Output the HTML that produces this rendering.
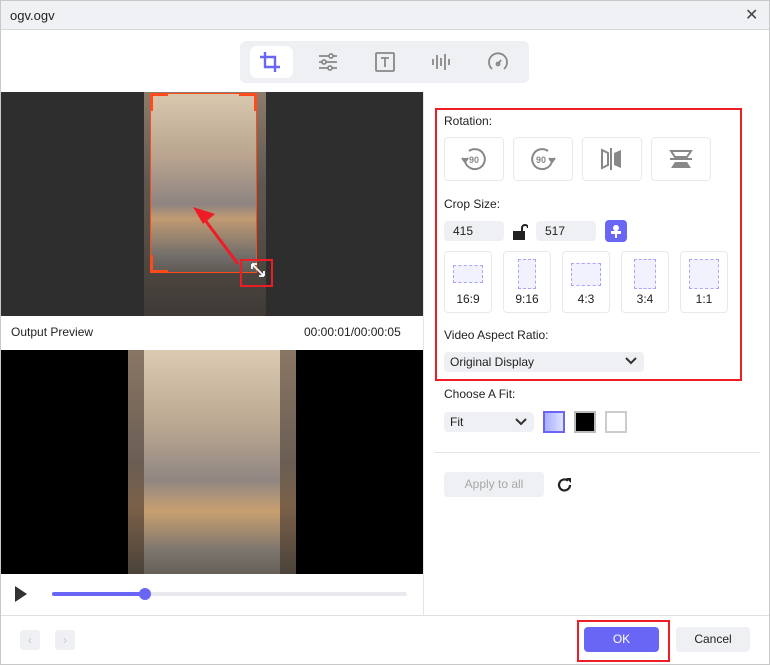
<!DOCTYPE html>
<html><head><meta charset="utf-8"><style>
*{box-sizing:border-box;margin:0;padding:0}
body{width:770px;height:665px;position:relative;background:#fff;font-family:"Liberation Sans",sans-serif;font-size:12px;color:#222;overflow:hidden}
.a{position:absolute}
.box{position:absolute;border:1px solid #e8e9ee;border-radius:4px;background:#fff}
.inp{position:absolute;background:#eff0f4;border-radius:4px;height:20px;line-height:20px;padding-left:9px;font-size:12px}
.ratio{position:absolute;top:251px;width:48px;height:62px;border:1px solid #e8e9ee;border-radius:4px;text-align:center;font-size:12px}
.ratio i{display:block;margin:0 auto;border:1px dashed #a9a6f7;background:#f2f2ff}
.ratio span{position:absolute;bottom:6px;left:0;right:0}
</style></head><body>
<div class="a" style="left:0;top:0;width:770px;height:665px;border:1px solid #c8c8c8"></div>
<div class="a" style="left:1px;top:1px;width:768px;height:29px;background:#f0f1f4;border-bottom:1px solid #d6d6d6"></div>
<div class="a" style="left:10px;top:8px;font-size:13px">ogv.ogv</div>
<div class="a" style="left:745px;top:5px;font-size:16px;color:#444">✕</div>
<!-- toolbar -->
<div class="a" style="left:240px;top:41px;width:289px;height:42px;background:#eff0f4;border-radius:6px"></div>
<div class="a" style="left:250px;top:46px;width:43px;height:32px;background:#fff;border-radius:7px"></div>
<svg class="a" style="left:258px;top:50px" width="24" height="24" viewBox="0 0 24 24" fill="none" stroke="#6a66f5" stroke-width="2.4"><path d="M7 2v15h15M2 7h15v15"/></svg>
<svg class="a" style="left:316px;top:50px" width="24" height="24" viewBox="0 0 24 24" fill="none" stroke="#888" stroke-width="1.8"><path d="M3 6h18M3 12h18M3 18h18"/><circle cx="15" cy="6" r="2" fill="#fff"/><circle cx="8" cy="12" r="2" fill="#fff"/><circle cx="14" cy="18" r="2" fill="#fff"/></svg>
<svg class="a" style="left:373px;top:50px" width="24" height="24" viewBox="0 0 24 24" fill="none" stroke="#888" stroke-width="1.8"><rect x="3" y="3" width="18" height="18" rx="1"/><path d="M8 8h8M12 8v9"/></svg>
<svg class="a" style="left:429px;top:50px" width="24" height="24" viewBox="0 0 24 24" fill="none" stroke="#888" stroke-width="1.8"><path d="M4 9v6M8 5v14M12 8v8M16 4v16M20 9v6"/></svg>
<svg class="a" style="left:486px;top:50px" width="24" height="24" viewBox="0 0 24 24" fill="none" stroke="#888" stroke-width="1.8"><path d="M6 19a9 9 0 1 1 12 0"/><path d="M12 14l3-4"/><circle cx="12" cy="14" r="1.5"/></svg>
<!-- top video -->
<div class="a" style="left:1px;top:92px;width:422px;height:224px;background:#2e2e2e"></div>
<div class="a" style="left:144px;top:92px;width:122px;height:224px;background:linear-gradient(#8c7c6c,#605850 40%,#5a5048 60%,#3e3a36)"></div>
<div class="a" style="left:150px;top:93px;width:107px;height:180px;background:linear-gradient(#d9c7ae,#b9a58f 35%,#8e8480 62%,#c19a72 70%,#74706c 90%,#605a55);border:1px solid #ff4a1c"></div>
<div class="a" style="left:150px;top:93px;width:18px;height:3px;background:#ff4a1c"></div>
<div class="a" style="left:239px;top:93px;width:18px;height:3px;background:#ff4a1c"></div>
<div class="a" style="left:150px;top:93px;width:3px;height:18px;background:#ff4a1c"></div>
<div class="a" style="left:254px;top:93px;width:3px;height:18px;background:#ff4a1c"></div>
<div class="a" style="left:150px;top:255px;width:3px;height:18px;background:#ff4a1c"></div>
<div class="a" style="left:150px;top:270px;width:18px;height:3px;background:#ff4a1c"></div>
<svg class="a" style="left:180px;top:200px" width="100" height="80"><path d="M58 64L22 16" stroke="#ee1c25" stroke-width="3"/><path d="M13 7l22 7-12 10z" fill="#ee1c25"/><path d="M72 64l12 12M72 64v5M72 64h5M84 76v-5M84 76h-5" stroke="#fff" stroke-width="1.8"/></svg>
<div class="a" style="left:240px;top:259px;width:33px;height:28px;border:2px solid #ee1c25"></div>
<!-- output preview -->
<div class="a" style="left:11px;top:325px;font-size:12px">Output Preview</div>
<div class="a" style="left:304px;top:325px;font-size:12px">00:00:01/00:00:05</div>
<div class="a" style="left:1px;top:350px;width:422px;height:224px;background:#000"></div>
<div class="a" style="left:128px;top:350px;width:168px;height:224px;background:linear-gradient(#8a7664,#6a5e54 50%,#7a6048 70%,#4a423a)"></div>
<div class="a" style="left:144px;top:350px;width:136px;height:224px;background:linear-gradient(#dccab2,#b9a690 35%,#908682 58%,#c8a070 72%,#7a746e 90%,#666058)"></div>
<svg class="a" style="left:13px;top:585px" width="16" height="18"><path d="M2 1l12 8-12 8z" fill="#333"/></svg>
<div class="a" style="left:52px;top:592px;width:355px;height:4px;background:#e8e9ee;border-radius:2px"></div>
<div class="a" style="left:52px;top:592px;width:94px;height:4px;background:#6a66f5;border-radius:2px"></div>
<div class="a" style="left:139px;top:588px;width:12px;height:12px;background:#6a66f5;border-radius:50%"></div>
<div class="a" style="left:423px;top:92px;width:1px;height:523px;background:#e4e4e4"></div>
<!-- right panel -->
<div class="a" style="left:435px;top:108px;width:307px;height:273px;border:2px solid #ee1c25"></div>
<div class="a" style="left:444px;top:114px">Rotation:</div>
<div class="box" style="left:444px;top:137px;width:60px;height:44px"></div>
<div class="box" style="left:513px;top:137px;width:60px;height:44px"></div>
<div class="box" style="left:582px;top:137px;width:60px;height:44px"></div>
<div class="box" style="left:651px;top:137px;width:60px;height:44px"></div>
<svg class="a" style="left:460px;top:145px" width="28" height="28" viewBox="0 0 28 28" fill="none" stroke="#888" stroke-width="2"><path d="M5 16a10 10 0 1 0 4-10"/><path d="M2 13l3 4 3-4" fill="#888"/><text x="9" y="18" font-size="9" font-weight="bold" fill="#888" stroke="none" font-family="Liberation Sans">90</text></svg>
<svg class="a" style="left:529px;top:145px" width="28" height="28" viewBox="0 0 28 28" fill="none" stroke="#888" stroke-width="2"><path d="M23 16a10 10 0 1 1-4-10"/><path d="M20 13l3 4 3-4" fill="#888"/><text x="7" y="18" font-size="9" font-weight="bold" fill="#888" stroke="none" font-family="Liberation Sans">90</text></svg>
<svg class="a" style="left:599px;top:146px" width="26" height="26"><path d="M3 4l6 3v12l-6 3z" fill="none" stroke="#888" stroke-width="2"/><path d="M12 2v22" stroke="#888" stroke-width="2"/><path d="M15 7l7-3v18l-7-3z" fill="#888"/></svg>
<svg class="a" style="left:668px;top:146px" width="26" height="26"><path d="M3 5h20l-4 6H7z" fill="none" stroke="#888" stroke-width="2"/><path d="M2 13h22" stroke="#888" stroke-width="2"/><path d="M7 16h12l4 6H3z" fill="#888"/></svg>
<div class="a" style="left:444px;top:197px">Crop Size:</div>
<div class="inp" style="left:444px;top:221px;width:60px">415</div>
<svg class="a" style="left:512px;top:224px" width="16" height="16"><rect x="1" y="7" width="12" height="9" fill="#222"/><path d="M10 7V4a3 3 0 0 1 6 0" fill="none" stroke="#222" stroke-width="2"/></svg>
<div class="inp" style="left:536px;top:221px;width:60px">517</div>
<div class="a" style="left:605px;top:220px;width:22px;height:22px;background:#6a66f5;border-radius:4px"></div>
<svg class="a" style="left:609px;top:224px" width="14" height="14"><circle cx="7" cy="4" r="3" fill="#fff"/><rect x="2" y="7" width="10" height="3" fill="#fff"/><rect x="6" y="9" width="2" height="5" fill="#fff"/></svg>
<div class="ratio" style="left:444px"><i style="width:30px;height:18px;margin-top:13px"></i><span>16:9</span></div>
<div class="ratio" style="left:503px"><i style="width:18px;height:30px;margin-top:7px"></i><span>9:16</span></div>
<div class="ratio" style="left:562px"><i style="width:30px;height:23px;margin-top:11px"></i><span>4:3</span></div>
<div class="ratio" style="left:621px"><i style="width:22px;height:30px;margin-top:7px"></i><span>3:4</span></div>
<div class="ratio" style="left:680px"><i style="width:30px;height:30px;margin-top:7px"></i><span>1:1</span></div>
<div class="a" style="left:444px;top:328px">Video Aspect Ratio:</div>
<div class="inp" style="left:444px;top:352px;width:200px;padding-left:6px">Original Display</div>
<svg class="a" style="left:624px;top:356px" width="14" height="10"><path d="M2 2l5 5 5-5" fill="none" stroke="#333" stroke-width="2"/></svg>
<div class="a" style="left:444px;top:387px">Choose A Fit:</div>
<div class="inp" style="left:444px;top:412px;width:90px;padding-left:6px">Fit</div>
<svg class="a" style="left:514px;top:417px" width="14" height="10"><path d="M2 2l5 5 5-5" fill="none" stroke="#333" stroke-width="2"/></svg>
<div class="a" style="left:543px;top:411px;width:22px;height:22px;border:2px solid #6a66f5;background:linear-gradient(90deg,#a8b0ff,#dfe2ff)"></div>
<div class="a" style="left:574px;top:411px;width:22px;height:22px;border:2px solid #bbb;background:#000"></div>
<div class="a" style="left:605px;top:411px;width:22px;height:22px;border:2px solid #ccc;background:#fff"></div>
<div class="a" style="left:434px;top:452px;width:326px;height:1px;background:#e4e4e4"></div>
<div class="a" style="left:444px;top:472px;width:100px;height:25px;background:#eff0f4;border-radius:4px;color:#a8a8a8;text-align:center;line-height:25px">Apply to all</div>
<svg class="a" style="left:556px;top:476px" width="18" height="18"><path d="M14 9a5.5 5.5 0 1 1-2-4.3" fill="none" stroke="#222" stroke-width="2.2"/><path d="M10 2h5v5z" fill="#222"/></svg>
<!-- bottom -->
<div class="a" style="left:1px;top:615px;width:768px;height:1px;background:#e0e0e0"></div>
<div class="a" style="left:20px;top:630px;width:20px;height:20px;background:#eff0f4;border-radius:3px;color:#c8c8c8;text-align:center;line-height:20px">‹</div>
<div class="a" style="left:55px;top:630px;width:20px;height:20px;background:#eff0f4;border-radius:3px;color:#c8c8c8;text-align:center;line-height:20px">›</div>
<div class="a" style="left:577px;top:620px;width:93px;height:42px;border:2px solid #ee1c25"></div>
<div class="a" style="left:584px;top:627px;width:75px;height:25px;background:#6a66f5;border-radius:4px;color:#fff;text-align:center;line-height:25px">OK</div>
<div class="a" style="left:676px;top:627px;width:74px;height:25px;background:#eff0f4;border-radius:4px;text-align:center;line-height:25px">Cancel</div>
</body></html>
